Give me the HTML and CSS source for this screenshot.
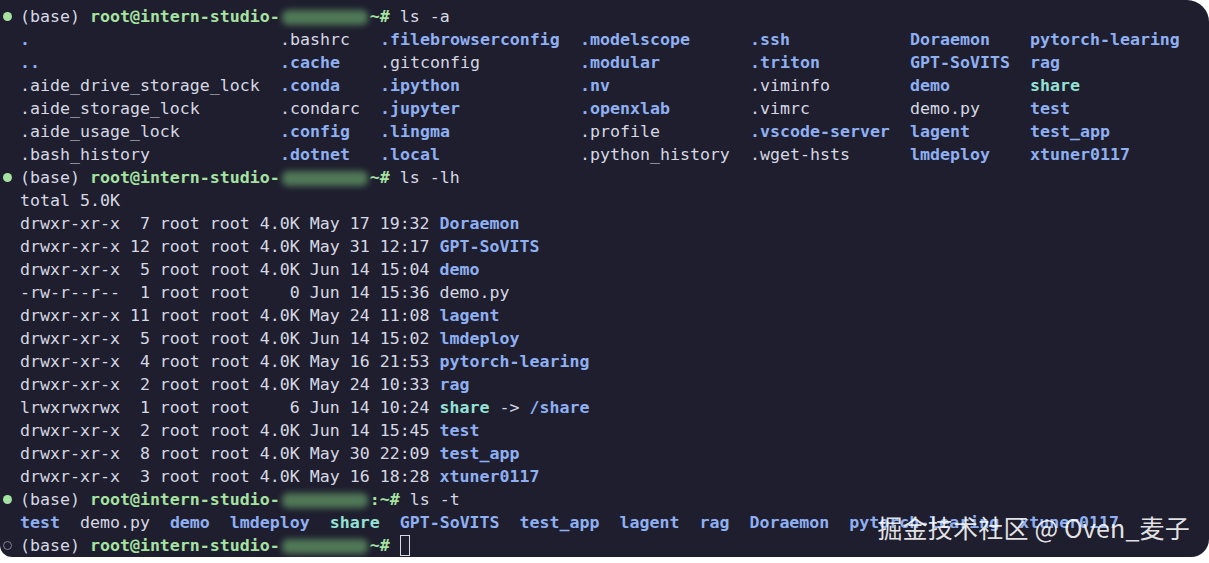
FILE: index.html
```html
<!DOCTYPE html>
<html>
<head>
<meta charset="utf-8">
<link rel="stylesheet" href="styles.css">
</head>
<body>
<div class="term">
<div class="ln"><span class="mk dot"></span>(base) <b class="g">root@intern-studio-</b><span class="blur"></span><b class="g">~#</b> ls -a</div>
<div class="ln"><span class="c c26 b">.</span><span class="c c10">.bashrc</span><span class="c c20 b">.filebrowserconfig</span><span class="c c17 b">.modelscope</span><span class="c c16 b">.ssh</span><span class="c c12 b">Doraemon</span><span class="b">pytorch-learing</span></div>
<div class="ln"><span class="c c26 b">..</span><span class="c c10 b">.cache</span><span class="c c20">.gitconfig</span><span class="c c17 b">.modular</span><span class="c c16 b">.triton</span><span class="c c12 b">GPT-SoVITS</span><span class="b">rag</span></div>
<div class="ln"><span class="c c26">.aide_drive_storage_lock</span><span class="c c10 b">.conda</span><span class="c c20 b">.ipython</span><span class="c c17 b">.nv</span><span class="c c16">.viminfo</span><span class="c c12 b">demo</span><span class="t">share</span></div>
<div class="ln"><span class="c c26">.aide_storage_lock</span><span class="c c10">.condarc</span><span class="c c20 b">.jupyter</span><span class="c c17 b">.openxlab</span><span class="c c16">.vimrc</span><span class="c c12">demo.py</span><span class="b">test</span></div>
<div class="ln"><span class="c c26">.aide_usage_lock</span><span class="c c10 b">.config</span><span class="c c20 b">.lingma</span><span class="c c17">.profile</span><span class="c c16 b">.vscode-server</span><span class="c c12 b">lagent</span><span class="b">test_app</span></div>
<div class="ln"><span class="c c26">.bash_history</span><span class="c c10 b">.dotnet</span><span class="c c20 b">.local</span><span class="c c17">.python_history</span><span class="c c16">.wget-hsts</span><span class="c c12 b">lmdeploy</span><span class="b">xtuner0117</span></div>
<div class="ln"><span class="mk dot"></span>(base) <b class="g">root@intern-studio-</b><span class="blur"></span><b class="g">~#</b> ls -lh</div>
<div class="ln">total 5.0K</div>
<div class="ln">drwxr-xr-x  7 root root 4.0K May 17 19:32 <span class="b">Doraemon</span></div>
<div class="ln">drwxr-xr-x 12 root root 4.0K May 31 12:17 <span class="b">GPT-SoVITS</span></div>
<div class="ln">drwxr-xr-x  5 root root 4.0K Jun 14 15:04 <span class="b">demo</span></div>
<div class="ln">-rw-r--r--  1 root root    0 Jun 14 15:36 demo.py</div>
<div class="ln">drwxr-xr-x 11 root root 4.0K May 24 11:08 <span class="b">lagent</span></div>
<div class="ln">drwxr-xr-x  5 root root 4.0K Jun 14 15:02 <span class="b">lmdeploy</span></div>
<div class="ln">drwxr-xr-x  4 root root 4.0K May 16 21:53 <span class="b">pytorch-learing</span></div>
<div class="ln">drwxr-xr-x  2 root root 4.0K May 24 10:33 <span class="b">rag</span></div>
<div class="ln">lrwxrwxrwx  1 root root    6 Jun 14 10:24 <span class="t">share</span> -&gt; <span class="b">/share</span></div>
<div class="ln">drwxr-xr-x  2 root root 4.0K Jun 14 15:45 <span class="b">test</span></div>
<div class="ln">drwxr-xr-x  8 root root 4.0K May 30 22:09 <span class="b">test_app</span></div>
<div class="ln">drwxr-xr-x  3 root root 4.0K May 16 18:28 <span class="b">xtuner0117</span></div>
<div class="ln"><span class="mk dot"></span>(base) <b class="g">root@intern-studio-</b><span class="blur"></span><b class="g">:~#</b> ls -t</div>
<div class="ln"><span class="b">test</span>  demo.py  <span class="b">demo</span>  <span class="b">lmdeploy</span>  <span class="t">share</span>  <span class="b">GPT-SoVITS</span>  <span class="b">test_app</span>  <span class="b">lagent</span>  <span class="b">rag</span>  <span class="b">Doraemon</span>  <span class="b">pytorch-learing</span>  <span class="b">xtuner0117</span></div>
<div class="ln"><span class="mk ring"></span>(base) <b class="g">root@intern-studio-</b><span class="blur"></span><b class="g">~#</b> <span class="cursor"></span></div>
<div class="wm">掘金技术社区 @ Oven_麦子</div>
</div>
</body>
</html>
```
FILE: styles.css
```css
html, body {
  margin: 0;
  padding: 0;
  background: #ffffff;
}
.term {
  position: relative;
  width: 1209px;
  height: 557px;
  box-sizing: border-box;
  background: #1e1e2e;
  border-radius: 0 22px 18px 12px;
  padding: 5px 0 0 20px;
  font-family: "DejaVu Sans Mono", "Liberation Mono", monospace;
  font-size: 16.6px;
  color: #d6d8e4;
  overflow: hidden;
}
.ln {
  height: 23px;
  line-height: 23px;
  white-space: pre;
}
.mk {
  display: inline-block;
  vertical-align: top;
  margin-left: -20px;
  width: 20px;
  position: relative;
  height: 23px;
}
.dot::before, .ring::before {
  content: "";
  position: absolute;
  left: 3px;
  top: 7px;
  width: 9px;
  height: 9px;
  border-radius: 50%;
  box-sizing: border-box;
}
.dot::before { background: #a6e3a1; }
.ring::before { border: 1.5px solid #7f8296; }
.g { color: #a6e3a1; font-weight: bold; }
.b { color: #8fb0f2; font-weight: bold; }
.t { color: #94e2d5; font-weight: bold; }
.c { display: inline-block; vertical-align: top; }
.c26 { width: 260px; }
.c10 { width: 100px; }
.c20 { width: 200px; }
.c17 { width: 170px; }
.c16 { width: 160px; }
.c12 { width: 120px; }
.blur {
  display: inline-block;
  vertical-align: middle;
  width: 86px;
  height: 15px;
  margin: 0 2px;
  background: #5d8f62;
  border-radius: 6px;
  filter: blur(3px);
  opacity: 0.8;
}
.cursor {
  display: inline-block;
  vertical-align: top;
  margin-top: 1px;
  width: 10px;
  height: 21px;
  box-sizing: border-box;
  border: 1px solid #d6d8e4;
}
.wm {
  position: absolute;
  right: 19px;
  bottom: 12px;
  font-family: "Noto Sans CJK SC", "Noto Sans", sans-serif;
  font-size: 25px;
  color: rgba(255, 255, 255, 0.88);
  letter-spacing: 0.2px;
  white-space: pre;
}
```
